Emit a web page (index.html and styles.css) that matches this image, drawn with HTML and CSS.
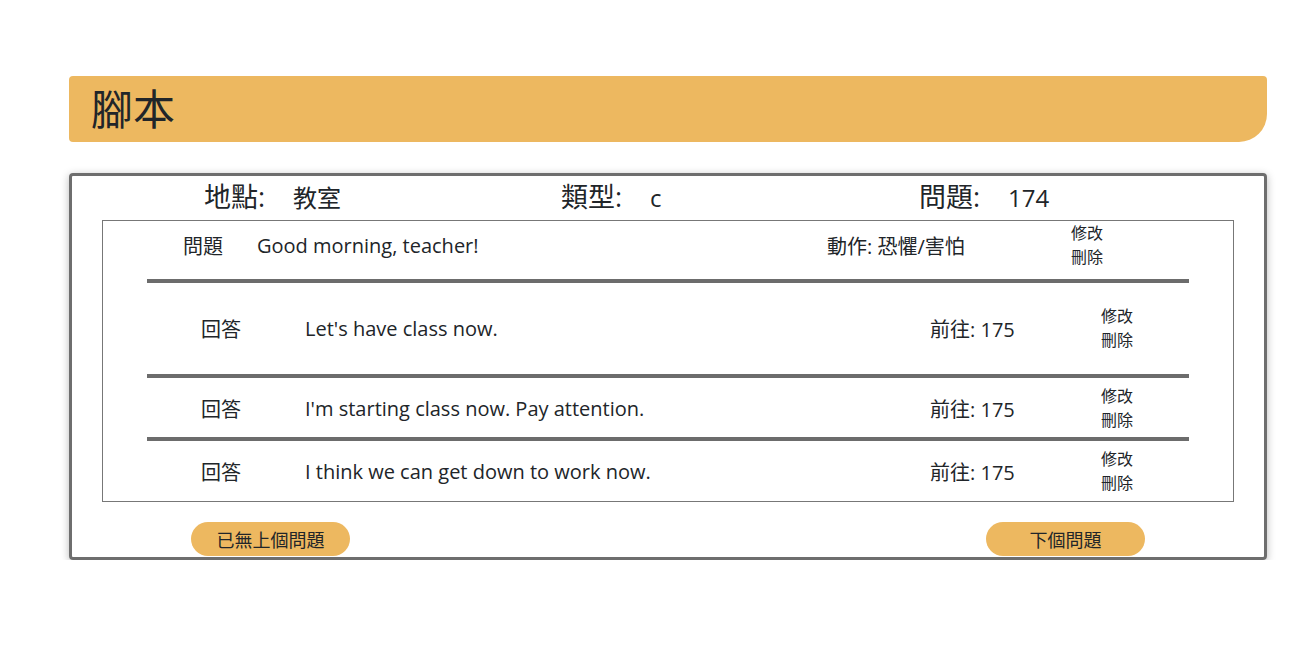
FILE: index.html
```html
<!DOCTYPE html>
<html lang="zh-Hant">
<head>
<meta charset="utf-8">
<title>腳本</title>
<link rel="stylesheet" href="styles.css">
</head>
<body>
<div class="page">
  <header class="title-bar"><h1 class="title">腳本</h1></header>
  <section class="card">
    <div class="info">
      <div class="info-item"><span class="info-label">地點:</span><span class="info-value">教室</span></div>
      <div class="info-item"><span class="info-label">類型:</span><span class="info-value">c</span></div>
      <div class="info-item"><span class="info-label">問題:</span><span class="info-value">174</span></div>
    </div>
    <div class="box">
      <div class="q-row">
        <span class="kind">問題</span>
        <span class="text">Good morning, teacher!</span>
        <span class="meta">動作: 恐懼/害怕</span>
        <div class="actions"><a class="act">修改</a><a class="act">刪除</a></div>
      </div>
      <div class="sep"></div>
      <div class="a-row a-first">
        <span class="kind">回答</span>
        <span class="text">Let's have class now.</span>
        <span class="meta">前往: 175</span>
        <div class="actions"><a class="act">修改</a><a class="act">刪除</a></div>
      </div>
      <div class="sep"></div>
      <div class="a-row">
        <span class="kind">回答</span>
        <span class="text">I'm starting class now. Pay attention.</span>
        <span class="meta">前往: 175</span>
        <div class="actions"><a class="act">修改</a><a class="act">刪除</a></div>
      </div>
      <div class="sep"></div>
      <div class="a-row a-last">
        <span class="kind">回答</span>
        <span class="text">I think we can get down to work now.</span>
        <span class="meta">前往: 175</span>
        <div class="actions"><a class="act">修改</a><a class="act">刪除</a></div>
      </div>
    </div>
    <div class="nav">
      <button class="btn">已無上個問題</button>
      <button class="btn">下個問題</button>
    </div>
  </section>
</div>
</body>
</html>
```
FILE: styles.css
```css
* { box-sizing: border-box; }
body {
  margin: 0;
  background: #fff;
  color: #212529;
  font-family: "Open Sans", "Noto Sans CJK TC", sans-serif;
}
.page {
  width: 1198px;
  margin: 76px 0 0 69px;
}
.title-bar {
  height: 66px;
  background: #edb860;
  border-radius: 4px 4px 28px 4px;
  padding-left: 22px;
  display: flex;
  align-items: center;
}
.title {
  margin: 0;
  font-size: 42px;
  font-weight: 400;
  line-height: 1;
  color: #212529;
}
.card {
  margin-top: 31px;
  border: 3px solid #6e6e6e;
  border-radius: 4px;
  box-shadow: 0 2px 8px rgba(0,0,0,0.28);
  padding: 0 0 1px;
}
.info {
  height: 44px;
  display: grid;
  grid-template-columns: 357px 358px 357px;
  padding: 0 0 6px 132px;
  align-items: center;
}
.info-item { display: flex; align-items: baseline; white-space: nowrap; }
.info-label { width: 89px; font-size: 27px; }
.info-value { font-size: 24px; }
.box {
  margin: 0 30px;
  border: 1px solid #777;
}
.sep {
  height: 4px;
  background: #6c6c6c;
  margin: 0 44px;
}
.q-row, .a-row {
  display: grid;
  align-items: center;
  font-size: 20px;
  white-space: nowrap;
}
.q-row {
  grid-template-columns: 74px 570px 244px 1fr;
  padding: 0 0 10px 80px;
}
.a-row {
  grid-template-columns: 104px 625px 171px 1fr;
  padding: 6px 0 5px 98px;
}
.a-row.a-first { padding: 21px 0 22px 98px; }
.a-row.a-last { padding: 6px 0 6px 98px; }
.actions {
  display: flex;
  flex-direction: column;
  font-size: 16px;
  line-height: 24px;
}
.act { color: #212529; cursor: pointer; }
.nav {
  display: flex;
  justify-content: space-between;
  padding: 20px 119px 0;
}
.btn {
  width: 159px;
  height: 34px;
  border: none;
  border-radius: 17px;
  background: #edb860;
  color: #212529;
  font-family: "Open Sans", "Noto Sans CJK TC", sans-serif;
  font-size: 18px;
  padding: 0;
  cursor: pointer;
}
```
